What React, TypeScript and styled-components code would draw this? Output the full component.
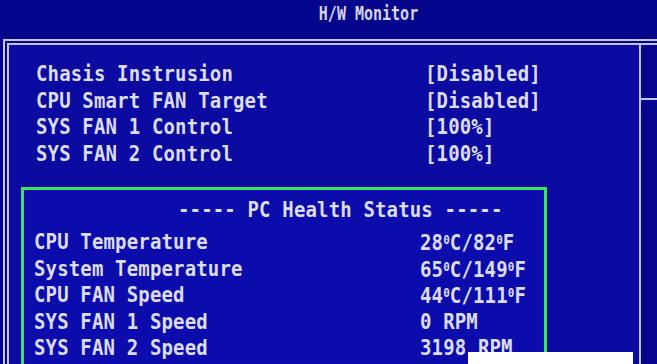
import React from 'react';
import styled, { createGlobalStyle } from 'styled-components';

const GlobalStyle = createGlobalStyle`
  html, body {
    margin: 0;
    padding: 0;
    background: #06068c;
    overflow: hidden;
  }
`;

const Screen = styled.div`
  width: 657px;
  height: 364px;
  background: #06068c;
  color: #dcdcf2;
  font-family: 'DejaVu Sans Mono', 'Liberation Mono', monospace;
  font-weight: bold;
  display: flex;
  flex-direction: column;
  overflow: hidden;
`;

const Header = styled.header`
  height: 39px;
  box-sizing: border-box;
  display: flex;
  justify-content: center;
  padding: 7px 0 0 80px;
  font-size: 15px;
  line-height: 18px;
  color: #d4d4ee;
  span {
    display: inline-block;
    transform: scaleY(1.3);
  }
`;

const Frame = styled.div`
  flex: 1;
  margin-left: 3px;
  border-top: 6px double #c4c4f6;
  border-left: 6px double #c4c4f6;
  display: flex;
  min-height: 0;
`;

const MainPanel = styled.section`
  position: relative;
  width: 630px;
  background: #0b0ba2;
  padding: 15px 0 0 0;
  box-sizing: border-box;
`;

const SidePanel = styled.aside`
  flex: 1;
  border-left: 2px solid #c4c4f6;
  background: #06068e;
  padding-top: 53px;
`;

const SideRule = styled.div`
  height: 2px;
  background: #c4c4f6;
`;

const List = styled.div`
  padding-left: 27px;
`;

const Row = styled.div<{ $labelWidth: number }>`
  display: grid;
  grid-template-columns: ${(p) => p.$labelWidth}px auto;
  height: 26.5px;
  line-height: 26.5px;
  font-size: 19px;
  letter-spacing: 0.15px;
  white-space: pre;
`;

const Glyphs = styled.span`
  display: inline-block;
  transform: scaleY(1.15);
  transform-origin: center;
`;

const HealthBox = styled.div`
  margin: 21px 0 0 12px;
  width: 526px;
  height: 200px;
  box-sizing: border-box;
  border: 3px solid #3ae45c;
  background: #0c0cac;
  padding: 6px 0 0 10px;
`;

const Heading = styled.div`
  padding-left: 144px;
  height: 32px;
  line-height: 26px;
  font-size: 19px;
  letter-spacing: 0.15px;
  white-space: pre;
`;

const Deg = styled.span`
  font-size: 11px;
  vertical-align: 5px;
  letter-spacing: 0;
`;

const Popup = styled.div`
  position: absolute;
  left: 459px;
  top: 307px;
  width: 165px;
  height: 40px;
  background: #ffffff;
`;

const settings = [
  ['Chasis Instrusion', '[Disabled]'],
  ['CPU Smart FAN Target', '[Disabled]'],
  ['SYS FAN 1 Control', '[100%]'],
  ['SYS FAN 2 Control', '[100%]'],
];

const temp = (c: number, f: number) => (
  <>
    {c}
    <Deg>0</Deg>C/{f}
    <Deg>0</Deg>F
  </>
);

const health: [string, React.ReactNode][] = [
  ['CPU Temperature', temp(28, 82)],
  ['System Temperature', temp(65, 149)],
  ['CPU FAN Speed', temp(44, 111)],
  ['SYS FAN 1 Speed', '0 RPM'],
  ['SYS FAN 2 Speed', '3198 RPM'],
];

export default function App() {
  return (
    <>
      <GlobalStyle />
      <Screen>
        <Header>
          <span>H/W Monitor</span>
        </Header>
        <Frame>
          <MainPanel>
            <List>
              {settings.map(([label, value]) => (
                <Row key={label} $labelWidth={389}>
                  <Glyphs>{label}</Glyphs>
                  <Glyphs>{value}</Glyphs>
                </Row>
              ))}
            </List>
            <HealthBox>
              <Heading>
                <Glyphs>----- PC Health Status -----</Glyphs>
              </Heading>
              {health.map(([label, value]) => (
                <Row key={label} $labelWidth={386}>
                  <Glyphs>{label}</Glyphs>
                  <Glyphs>{value}</Glyphs>
                </Row>
              ))}
            </HealthBox>
            <Popup />
          </MainPanel>
          <SidePanel>
            <SideRule />
          </SidePanel>
        </Frame>
      </Screen>
    </>
  );
}
